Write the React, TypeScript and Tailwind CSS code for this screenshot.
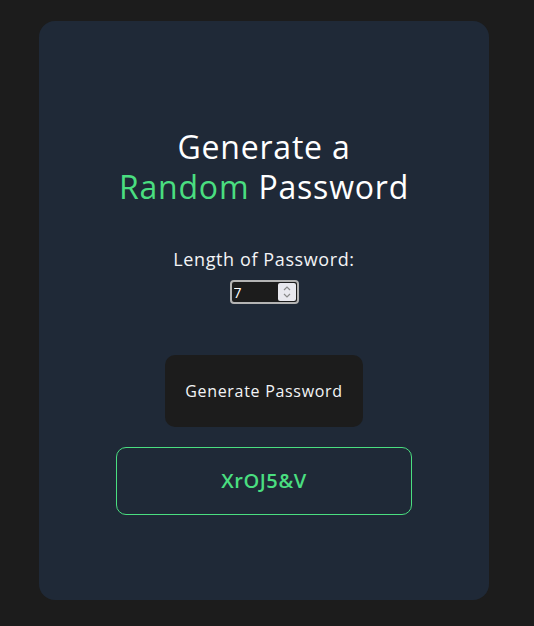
import { useState } from "react";

const App = () => {
  const [length, setLength] = useState(7);

  return (
    <div className="min-h-screen w-full bg-[#1c1c1c] pl-[39px] pt-[21px] pb-[26px] font-['Open_Sans',sans-serif]">
      <div className="flex h-[579px] w-[450px] flex-col items-center rounded-2xl bg-[#1f2937] pt-[106px] text-white">
        {/* heading */}
        <h1 className="text-center text-[32px] leading-10 font-normal tracking-[0.8px]">
          Generate a
          <br />
          <span className="text-[#4ade80]">Random</span> Password
        </h1>

        <label className="mt-[38px] text-lg leading-7 tracking-[0.6px] text-gray-100">Length of Password:</label>

        {/* number input with spinner */}
        <div className="mt-[7px] flex h-6 w-[69px] items-stretch rounded-[4px] border-2 border-[#b4b4b4] bg-[#1c1c1c] p-px">
          <input
            type="text"
            value={length}
            onChange={(e) => setLength(Number(e.target.value) || 0)}
            className="w-0 flex-1 bg-transparent pl-[1px] text-sm leading-none text-white outline-none"
          />
          <div className="flex w-[18px] flex-col items-center justify-center rounded-[2px] bg-[#e8e8ee]">
            <svg width="10" height="16" viewBox="0 0 10 16" fill="none" stroke="#8a8a8a" strokeWidth="1.2">
              <path d="M2 6 L5 3 L8 6" />
              <path d="M2 10 L5 13 L8 10" />
            </svg>
          </div>
        </div>

        <button className="mt-[51px] h-[72px] w-[198px] rounded-[10px] bg-[#1c1c1c] text-base tracking-[0.7px] text-gray-100">
          Generate Password
        </button>

        <div className="mt-5 flex h-[68px] w-[296px] items-center justify-center rounded-[10px] border border-[#4ade80] text-xl font-semibold tracking-[0.6px] text-[#4ade80]">
          XrOJ5&amp;V
        </div>
      </div>
    </div>
  );
};

export default App;
